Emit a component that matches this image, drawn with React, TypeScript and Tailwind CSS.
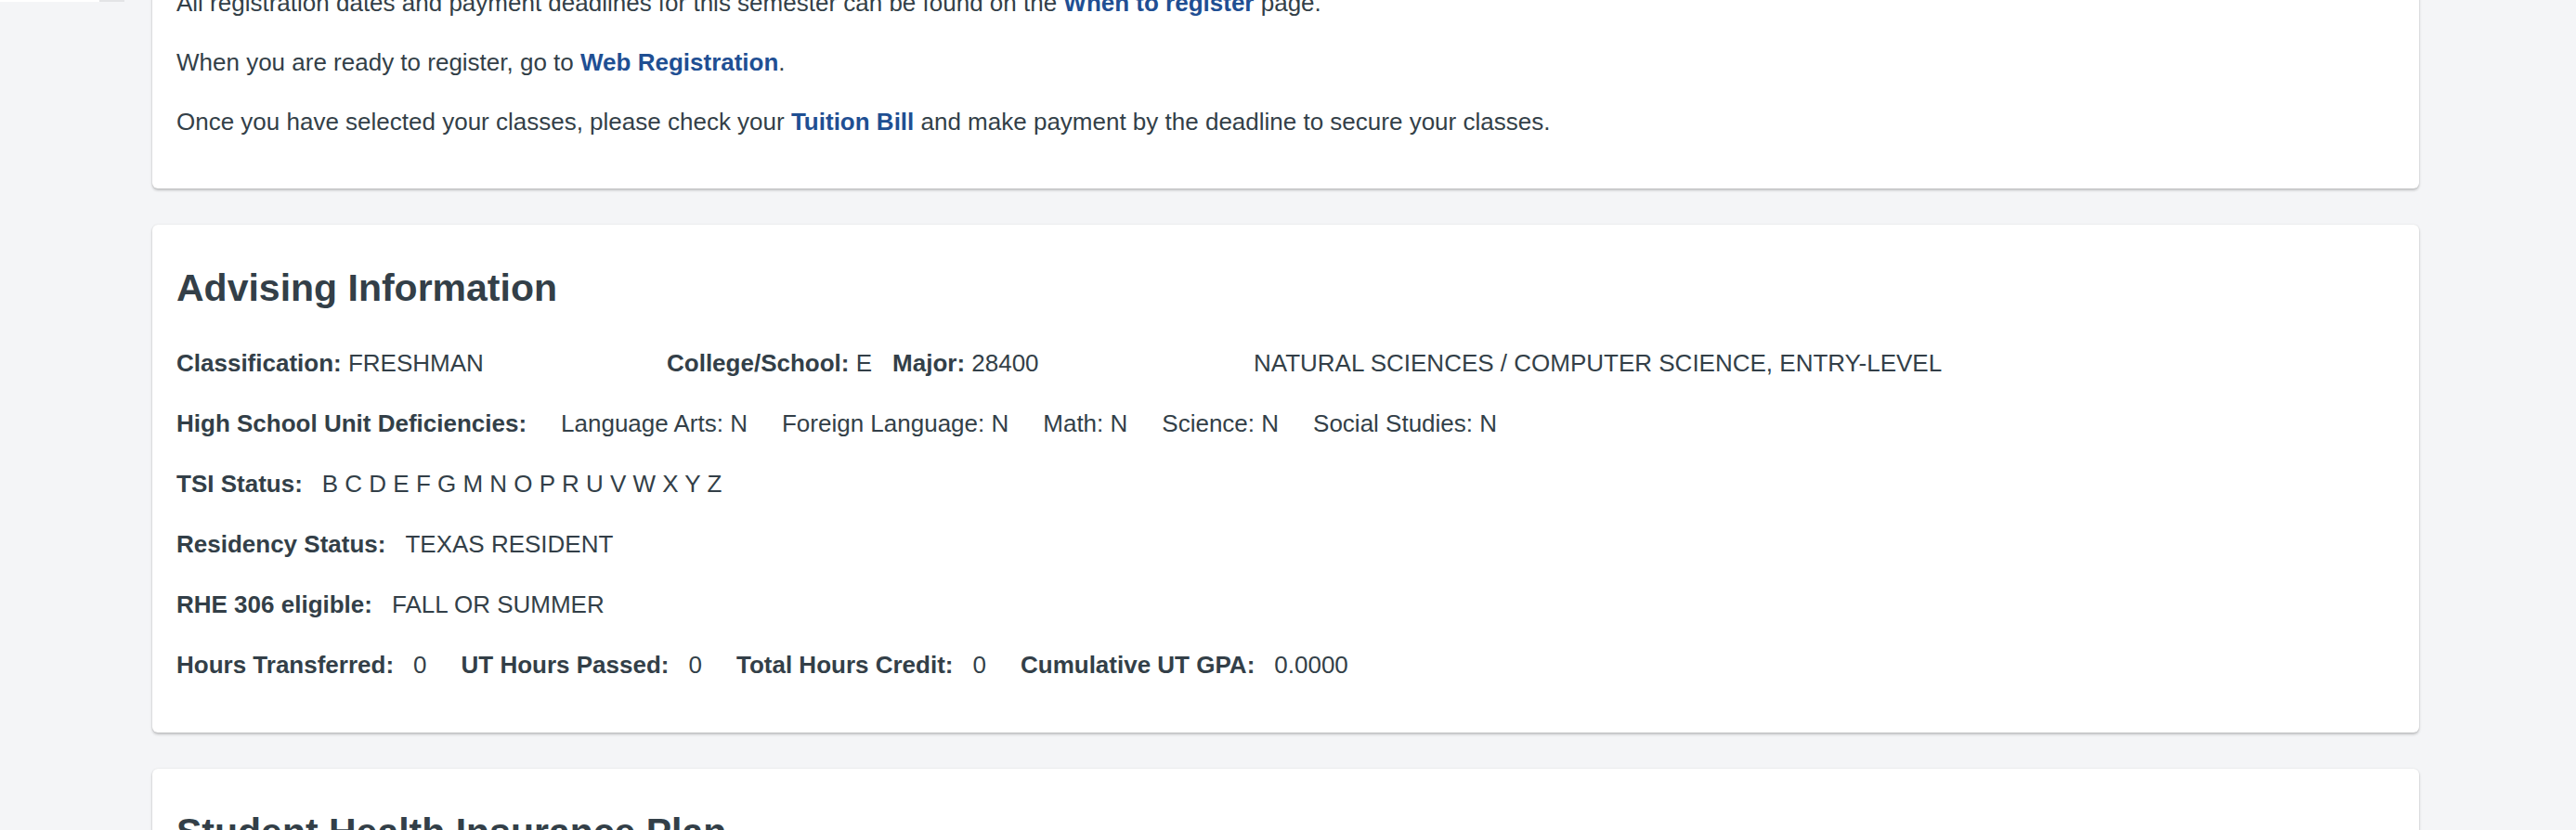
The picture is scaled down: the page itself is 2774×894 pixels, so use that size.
import React from "react";

const link = "font-bold text-[#1f4f93]";

function Field({ label, value, gap = "ml-[21px]" }: { label: string; value: string; gap?: string }) {
  return (
    <span className="whitespace-nowrap">
      <b className="font-bold">{label}</b>
      <span className={gap}>{value}</span>
    </span>
  );
}

export default function App() {
  return (
    <div className="relative h-[894px] overflow-hidden bg-[#f4f5f7] font-['Liberation_Sans',Arial,sans-serif] text-[26px] leading-[38px] text-[#333f48]">
      {/* bottom edge of the nav tab above */}
      <div className="absolute left-0 top-0 flex h-[2px]">
        <div className="w-[107px] bg-white" />
        <div className="w-[27px] bg-[#e3e4e6]" />
      </div>

      <main className="-mt-[42px] flex flex-col gap-[39px] pl-[164px] pr-[169px]">
        <section className="rounded-[6px] bg-white px-[26px] pt-[26px] pb-[53px] shadow-[0_2px_3px_rgba(0,0,0,0.22),0_0_2px_rgba(0,0,0,0.1)]">
          <div className="flex flex-col gap-[26px]">
            <p>
              All registration dates and payment deadlines for this semester can be found on the{" "}
              <a className={link}>When to register</a> page.
            </p>
            <p>
              When you are ready to register, go to <a className={link}>Web Registration</a>.
            </p>
            <p>
              Once you have selected your classes, please check your <a className={link}>Tuition Bill</a> and make
              payment by the deadline to secure your classes.
            </p>
          </div>
        </section>

        <section className="rounded-[6px] bg-white px-[26px] pt-[44px] pb-[54px] shadow-[0_2px_3px_rgba(0,0,0,0.22),0_0_2px_rgba(0,0,0,0.1)]">
          <h2 className="text-[41px] font-bold leading-[49px]">Advising Information</h2>
          <div className="mt-[37px] flex flex-col gap-[27px]">
            <div className="flex">
              <div className="w-[528px] shrink-0">
                <Field label="Classification:" value=" FRESHMAN" gap="" />
              </div>
              <div className="w-[632px] shrink-0">
                <Field label="College/School:" value=" E" gap="" />
                <span className="ml-[22px]">
                  <Field label="Major:" value=" 28400" gap="" />
                </span>
              </div>
              <div>NATURAL SCIENCES / COMPUTER SCIENCE, ENTRY-LEVEL</div>
            </div>

            <div className="flex gap-[37px]">
              <b className="font-bold">High School Unit Deficiencies:</b>
              <span>Language Arts: N</span>
              <span>Foreign Language: N</span>
              <span>Math: N</span>
              <span>Science: N</span>
              <span>Social Studies: N</span>
            </div>

            <div>
              <Field label="TSI Status:" value="B C D E F G M N O P R U V W X Y Z" />
            </div>
            <div>
              <Field label="Residency Status:" value="TEXAS RESIDENT" />
            </div>
            <div>
              <Field label="RHE 306 eligible:" value="FALL OR SUMMER" />
            </div>

            <div className="flex gap-[37px]">
              <Field label="Hours Transferred:" value="0" />
              <Field label="UT Hours Passed:" value="0" />
              <Field label="Total Hours Credit:" value="0" />
              <Field label="Cumulative UT GPA:" value="0.0000" />
            </div>
          </div>
        </section>

        <section className="h-[400px] rounded-[6px] bg-white px-[26px] pt-[44px] shadow-[0_2px_3px_rgba(0,0,0,0.22),0_0_2px_rgba(0,0,0,0.1)]">
          <h2 className="text-[41px] font-bold leading-[49px]">Student Health Insurance Plan</h2>
        </section>
      </main>
    </div>
  );
}
